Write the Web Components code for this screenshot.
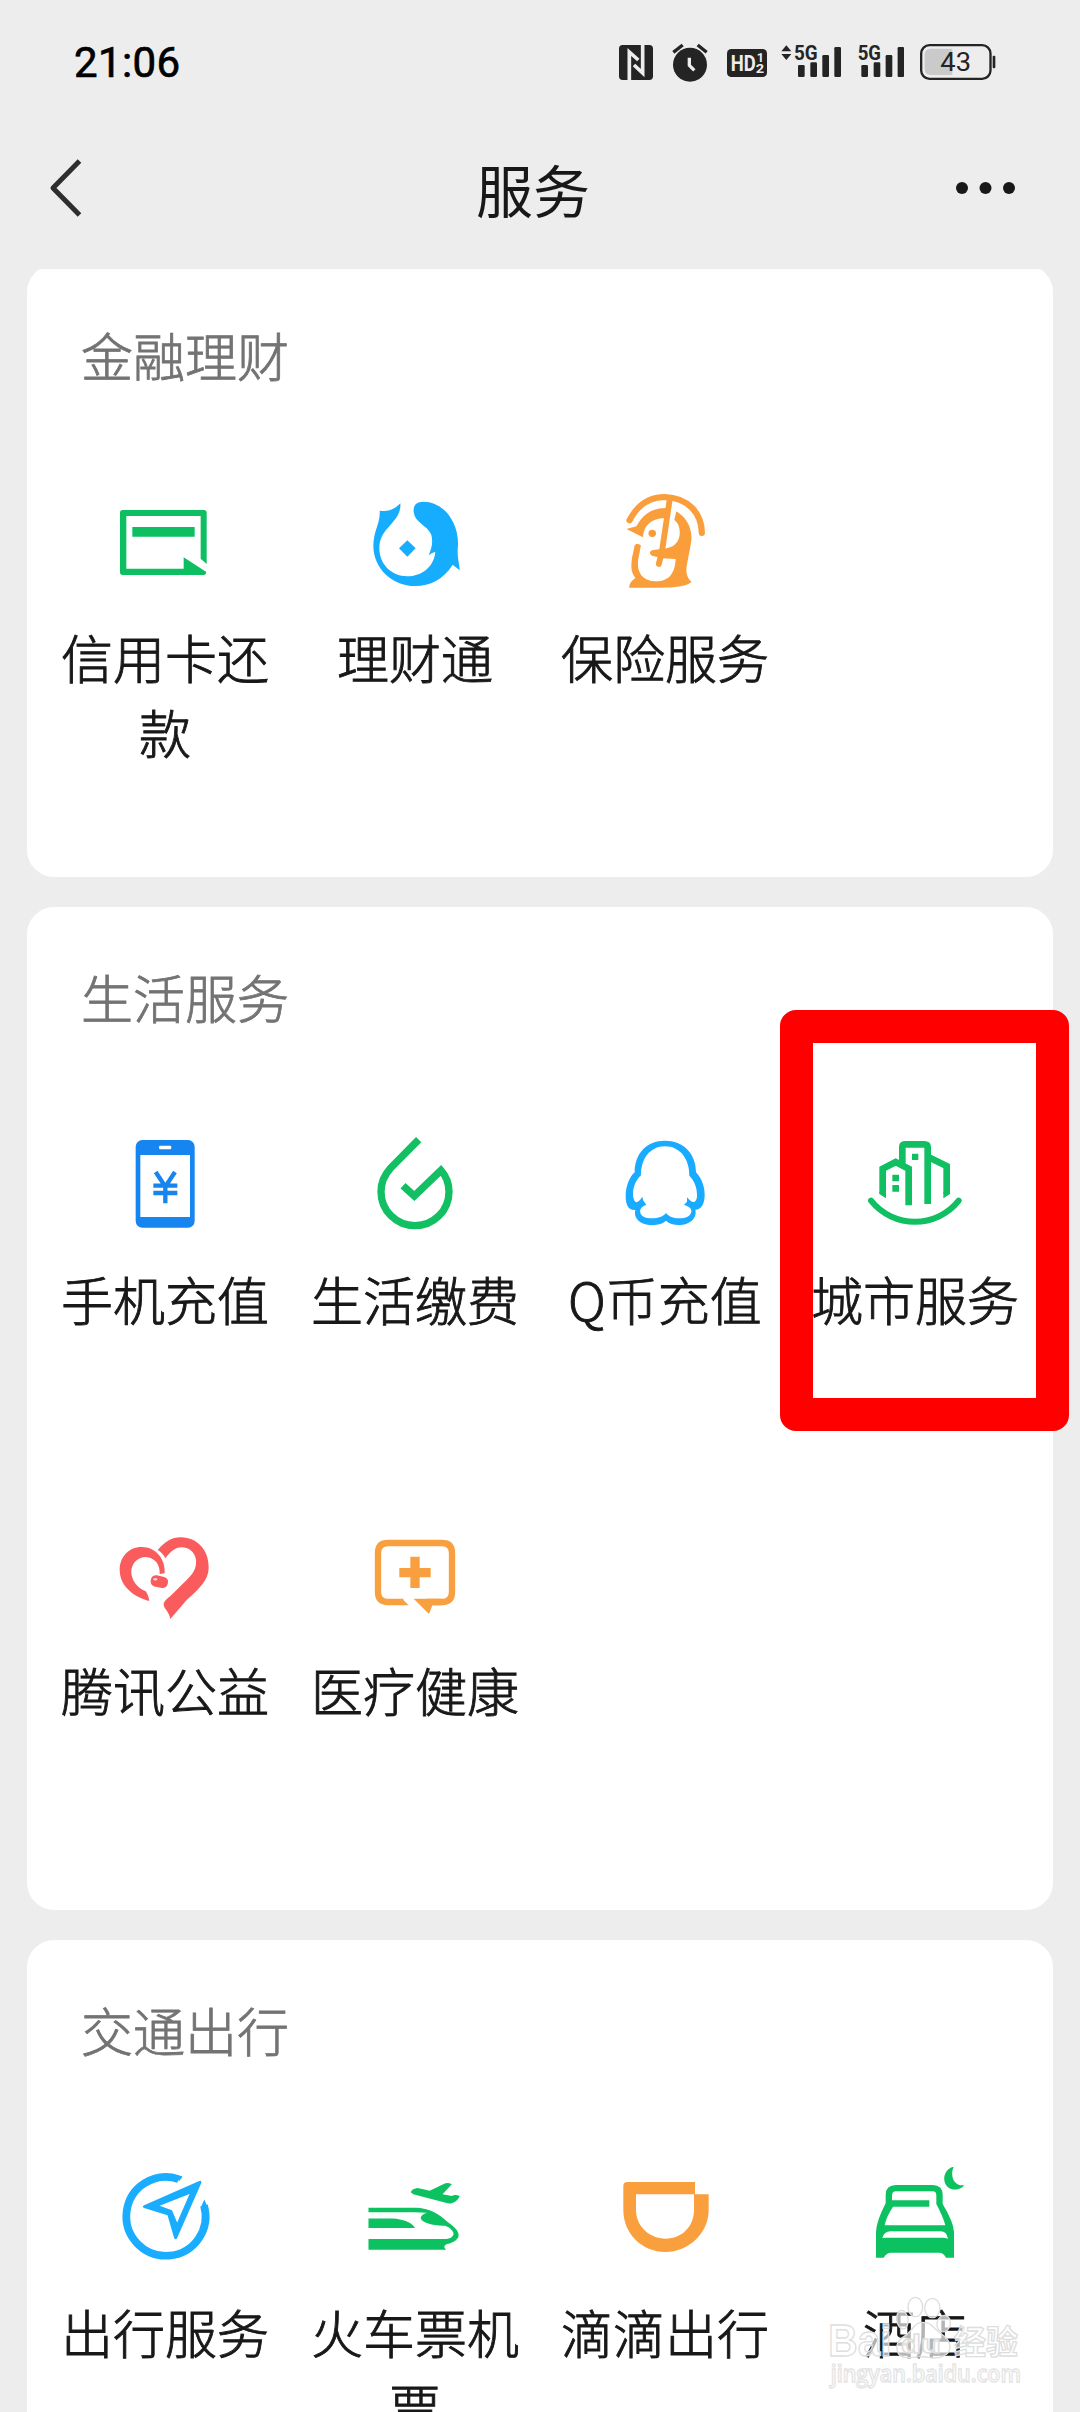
<!DOCTYPE html>
<html lang="zh-CN">
<head>
<meta charset="utf-8">
<title>服务</title>
<style>
html,body{margin:0;padding:0}
body{width:1080px;height:2412px;overflow:hidden;background:#ededed;font-family:"Noto Sans CJK SC","Noto Sans",sans-serif;color:#181818}
</style>
</head>
<body>
<services-page></services-page>
<script>
const define = (name, html) => {
  const t = document.createElement('template');
  t.innerHTML = html;
  customElements.define(name, class extends HTMLElement {
    constructor() {
      super();
      this.attachShadow({ mode: 'open' }).append(t.content.cloneNode(true));
    }
  });
};

define('status-bar', `
<style>
:host{display:flex;height:84px;padding:0 84px 0 74px;box-sizing:border-box;align-items:flex-start;justify-content:space-between}
time{font:400 42px/50px Roboto,sans-serif;-webkit-text-stroke:.7px #000;letter-spacing:.4px;color:#000;margin-top:38px}
.icons{display:flex;margin-top:40px;color:#242424}
svg{display:block;height:43.33px;fill:currentColor}
text{font-family:Roboto,sans-serif}
</style>
<time>21:06</time>
<div class="icons">
<svg style="width:34px" viewBox="117 60 102 130"><rect x="117" y="75" width="102" height="105" rx="11"/><path d="M148 180V96l27 24M188 75v84l-26-24" fill="none" stroke="#ededed" stroke-width="11"/></svg>
<svg style="width:36px;margin-left:19px" viewBox="276 60 108 130"><circle cx="330" cy="134" r="51"/><path d="M280 97l28-22M380 97l-27-22" stroke="currentColor" stroke-width="10"/><path d="M328 113v23l15 15" fill="none" stroke="#ededed" stroke-width="10"/></svg>
<svg style="width:40px;margin-left:19px" viewBox="441 60 120 130"><rect x="441" y="87" width="120" height="84" rx="13"/><g fill="#ededed"><text x="452" y="152" font-size="66" font-weight="700" textLength="75" lengthAdjust="spacingAndGlyphs">HD</text><text x="530" y="126" font-size="38" font-weight="700">1</text><text x="527" y="160" font-size="38" font-weight="700" textLength="25" lengthAdjust="spacingAndGlyphs">2</text></g></svg>
<svg style="width:60px;margin-left:14px" viewBox="603 60 180 130"><path d="M604 94l15-18 15 18zM604 102l15 18 15-18z"/><text x="642" y="120" font-size="61" font-weight="700" textLength="71" lengthAdjust="spacingAndGlyphs">5G</text><rect x="654" y="135" width="20" height="36" rx="4"/><rect x="691" y="127" width="20" height="44" rx="4"/><rect x="727" y="105" width="20" height="66" rx="4"/><rect x="763" y="81" width="20" height="90" rx="4"/></svg>
<svg style="width:46.3px;margin-left:16.7px" viewBox="833 60 139 130"><text x="832" y="120" font-size="61" font-weight="700" textLength="70" lengthAdjust="spacingAndGlyphs">5G</text><rect x="843" y="135" width="20" height="36" rx="4"/><rect x="880" y="127" width="20" height="44" rx="4"/><rect x="916" y="105" width="20" height="66" rx="4"/><rect x="952" y="81" width="20" height="90" rx="4"/></svg>
<svg style="width:76px;margin-left:16px" viewBox="1020 60 228 130"><path d="M1117 86V165H1052Q1034 165 1034 147V104Q1034 86 1052 86Z" fill="#cacaca"/><rect x="1023.500" y="75.500" width="208" height="101" rx="25" fill="none" stroke="currentColor" stroke-width="7"/><rect x="1238" y="107" width="8" height="38" rx="3"/><text x="1081" y="153" font-size="80" textLength="92" lengthAdjust="spacingAndGlyphs">43</text></svg>
</div>`);

define('nav-bar', `
<style>
:host{display:flex;height:185px;padding:0 64px 0 46px;box-sizing:border-box;justify-content:space-between;align-items:flex-start}
svg{display:block;margin-top:72px}
h1{margin:64px 0 0 26px;font-weight:400;font-size:57px;line-height:80px}
</style>
<svg width="40" height="64" viewBox="46 156 40 64" fill="none" stroke="#2e2e2e" stroke-width="5"><path d="M79.500 161L53 188l26.500 27" stroke-linejoin="round"/></svg>
<h1><slot></slot></h1>
<svg width="62" height="64" viewBox="954 156 62 64" fill="#181818"><circle cx="962" cy="188" r="6"/><circle cx="985.500" cy="188" r="6"/><circle cx="1009" cy="188" r="6"/></svg>`);

define('service-card', `
<style>
:host{display:block;box-sizing:border-box;margin:0 27px 30px;padding:52px 13px 0;background:#fff;border-radius:27px}
h2{margin:0 0 100px 41px;font-weight:300;font-size:52px;line-height:75px;color:#737373;-webkit-text-stroke:.8px #737373}
.grid{display:grid;grid-template-columns:repeat(4,250px);grid-auto-rows:391px}
</style>
<h2><slot name="title"></slot></h2>
<div class="grid"><slot></slot></div>`);

define('service-item', `
<style>
:host{display:flex;flex-direction:column;align-items:center}
::slotted(svg){display:block;width:100px;height:100px;flex:none}
.label{width:212px;margin-top:27px;text-align:center;font-weight:300;font-size:52px;line-height:75px;word-break:break-all;-webkit-text-stroke:.9px #181818}
</style>
<slot name="icon"></slot>
<div class="label"><slot></slot></div>`);

define('focus-frame', `
<style>:host{position:absolute;left:780px;top:1010px;width:289px;height:421px;box-sizing:border-box;border:33px solid #f00;border-radius:16px}</style>`);

define('water-mark', `
<style>
:host{position:absolute;left:815px;top:2285px}
svg{display:block}
text{font-weight:700}
</style>
<svg width="220" height="110" viewBox="0 0 660 330" fill="#fff" fill-opacity=".68" stroke="#dedede" stroke-width="4">
<ellipse cx="301" cy="66" rx="22" ry="29"/><ellipse cx="352" cy="69" rx="23" ry="29"/><ellipse cx="262" cy="104" rx="17" ry="28" transform="rotate(-8 262 104)"/><ellipse cx="386" cy="116" rx="20" ry="25" transform="rotate(12 386 116)"/>
<path d="M322 112C296 112 292 143 263 157C235 175 242 218 276 218C300 218 320 212 340 217C365 222 405 218 405 184C403 155 375 148 355 126C347 116 338 112 322 112Z"/>
<text x="40" y="214" font-family="Liberation Sans" font-size="134" textLength="190" lengthAdjust="spacingAndGlyphs">Bai</text>
<text x="258" y="203" font-family="Liberation Sans" font-size="80" textLength="120" lengthAdjust="spacingAndGlyphs">du</text>
<text x="417" y="208" font-family="Noto Sans CJK SC" font-size="98" textLength="192" lengthAdjust="spacingAndGlyphs">经验</text>
<text x="47" y="290" font-family="Open Sans" font-size="68" style="font-weight:600" stroke="#e4e4e4" textLength="571" lengthAdjust="spacingAndGlyphs">jingyan.baidu.com</text>
</svg>`);

define('services-page', `
<style>
:host{display:block;position:relative;width:1080px;height:2412px;overflow:hidden}
.scroll{height:2143px;overflow:hidden}
.scroll service-card:first-child{margin-top:-4px;height:612px}
.life{height:1003px}
</style>
<status-bar></status-bar>
<nav-bar>服务</nav-bar>
<div class="scroll">
<service-card><span slot="title">金融理财</span>
<service-item><svg slot="icon" viewBox="225 576 300 300" fill="#0dbf60"><path d="M248 630H492q8 0 8 8V792L482 776V648H259V806H431V772L498 815q2 9-8 10H248q-8 0-8-8V638q0-8 8-8z"/><path d="M277 681h187v29H277z"/></svg>信用卡还款</service-item>
<service-item><svg slot="icon" viewBox="975 576 300 300" fill="#16adff"><path d="M1081 610C1062 630 1042 636 1019 632C1022 670 1000 690 1000 740C1002 805 1055 858 1126 858C1170 858 1210 838 1238 794L1259 811C1259 790 1250 775 1254 735C1256 665 1210 605 1150 605C1125 605 1120 620 1121 635C1125 670 1163 675 1174 705C1180 730 1174 745 1166 766C1172 762 1178 757 1186 756C1182 800 1145 829 1102 829C1052 829 1018 790 1018 745C1018 705 1040 690 1058 667C1075 648 1083 630 1081 610Z"/><path d="M1102 721l25 24-25 25-25-25z"/></svg>理财通</service-item>
<service-item><svg slot="icon" viewBox="217.800 96 290.400 300" preserveAspectRatio="none" fill="#fa9d3b"><g fill="none" stroke="#fa9d3b" stroke-width="18" stroke-linecap="round"><path d="M260 181Q295 111 362 111C430 113 470 160 470 219"/><path d="M377 116L354 275L345 312" stroke-width="17"/></g><path d="M251 207L280 199C297 165 325 143 367 144L362 174C325 175 300 195 299 232Z"/><circle cx="326" cy="220" r="11"/><path d="M396 154C420 170 440 195 440 235C436 275 425 310 425 335C427 350 432 358 440 366C425 380 390 383 350 383H259C260 368 268 361 277 354C262 335 265 315 267 295L275 256q6-10 18 0L285 300C280 345 305 364 338 364C370 364 392 345 394 297L355 295L325 287q-12-8 0-16L345 268L360 266C390 264 405 245 406 220C406 200 400 187 390 180Z"/></svg>保险服务</service-item>
</service-card>
<service-card class="life"><span slot="title">生活服务</span>
<service-item><svg slot="icon" viewBox="225 522 300 300" fill="#1785f0"><rect x="287" y="540" width="177" height="263" rx="20"/><path fill="#fff" d="M301 585h149v186H301z"/><rect x="357" y="557" width="37" height="11" rx="4" fill="#fff"/><path d="M347 636L376 680L405 636M340 677h72M340 699h72M376 672v58" fill="none" stroke="#1785f0" stroke-width="13"/></svg>手机充值</service-item>
<service-item><svg slot="icon" viewBox="975 522 300 300" fill="none" stroke="#12bf62" stroke-width="22"><path d="M1136 539L1052 624C1030 648 1023 668 1023 695A102 102 0 0 0 1227 695C1227 670 1219 649 1203 631L1123 708L1089 677"/></svg>生活缴费</service-item>
<service-item><svg slot="icon" viewBox="165 462 300 300" fill="#18abff" fill-rule="evenodd"><path d="M224 577C224 520 260 482 315 482C370 482 408 520 408 577C428 598 434 625 434 645C434 670 425 689 406 689C412 716 388 735 356 735C340 735 328 731 318 722C308 731 295 735 275 735C245 735 219 718 226 690C205 691 197 675 197 648C197 622 207 592 224 577ZM243 586C226 602 219 622 219 645C220 660 225 667 231 667Q240 663 247 650L250 662L259 674C245 680 239 685 241 698C244 710 258 715 275 715C295 715 310 709 318 699C326 709 340 715 357 715C378 715 392 708 394 695C395 685 388 680 372 674L381 665V652C390 662 395 667 402 666C409 664 411 655 411 645C411 622 403 602 388 587C389 540 362 499 315 499C268 499 242 540 243 586Z"/></svg>Q币充值</service-item>
<service-item><svg slot="icon" viewBox="915 462 300 300" fill="#10bf62"><g fill="none" stroke="#10bf62" stroke-width="20"><path d="M968 640V566L1007 546L1046 566V676M1027 555V500Q1027 493 1037 493H1093Q1103 493 1103 502V672M1103 530L1160 558V641"/><path d="M933 662C1000 746 1130 746 1196 662" stroke-width="18" stroke-linecap="round"/></g><path d="M958 635h20v20l-20-13zM1170 635h-20v20l20-13zM1056 521h19v19h-19zM997 584h20v20h-20zM997 615h20v20h-20z"/></svg>城市服务</service-item>
<service-item><svg slot="icon" viewBox="225 75 300 300" fill="#fa5b5c"><path d="M353 150C375 125 395 112 422 112C475 112 508 155 506 205C505 240 480 265 440 300L391 357C388 335 370 325 371 312C372 303 380 297 392 287L440 240C460 220 470 205 468 180C465 155 445 142 425 142C405 142 392 155 376 175Q368 158 353 150Z"/><path d="M359 222L374 220C377 180 350 141 305 141C265 141 239 172 239 210C240 262 285 292 328 303C326 290 322 280 317 274C290 262 273 240 274 212C276 188 295 171 318 171C342 172 361 192 359 222Z"/><rect x="332" y="228" width="52" height="34" rx="15" transform="rotate(12 358 245)"/><ellipse cx="346" cy="238" rx="6" ry="4" fill="#fcc"/></svg>腾讯公益</service-item>
<service-item><svg slot="icon" viewBox="975 75 300 300" fill="#f8a03f"><path d="M1090 306H1044Q1014 306 1014 276V159Q1014 129 1044 129H1206Q1236 129 1236 159V276Q1236 306 1206 306H1160" fill="none" stroke="#f8a03f" stroke-width="19"/><path d="M1086 296.500L1106 315.500H1086ZM1121 296.500H1205V315.500H1177L1167 342ZM1111 170h28v34h33v28h-33v32h-28v-32h-33v-28h33z"/></svg>医疗健康</service-item>
</service-card>
<service-card><span slot="title">交通出行</span>
<service-item><svg slot="icon" viewBox="332.500 844.500 290.400 294.700" preserveAspectRatio="none" fill="#1aadff"><path d="M517 880A115 116 0 1 0 591 958" fill="none" stroke="#1aadff" stroke-width="22.500"/><path d="M512 870Q530 870 528 874L518 887ZM583 960L592 940L601 962Z"/><path fill-rule="evenodd" d="M577 886Q585 882 583 892L513 1054Q508 1062 504 1053L485 987L417 965Q409 961 417 957ZM549 924L462 959L498 972L513 1008Z"/></svg>出行服务</service-item>
<service-item><svg slot="icon" viewBox="1059.900 845.900 290.400 294.700" preserveAspectRatio="none" fill="#0cc160"><path d="M1070 966H1210C1250 968 1275 985 1300 1008C1325 1025 1335 1040 1331 1052C1325 1065 1310 1070 1298 1073C1288 1078 1288 1083 1296 1090H1070V1058H1295C1310 1057 1320 1048 1316 1038C1312 1028 1300 1022 1293 1019C1262 1021 1225 1010 1222 998C1221 990 1230 983 1242 981Q1228 979 1200 979H1070Z"/><path d="M1070 998H1140C1170 1000 1195 1008 1205 1026H1070ZM1193 920Q1195 911 1212 908Q1228 912 1248 916L1290 895Q1300 890 1312 897L1285 926L1312 931Q1322 926 1335 931C1330 945 1315 955 1300 953L1200 926Z"/></svg>火车票机票</service-item>
<service-item><svg slot="icon" viewBox="165 111 300 300" fill="#fa9f3e" fill-rule="evenodd"><path d="M202 156H405V193H446V240C446 310 385 366 317 366C245 366 190 310 190 240V168Q190 156 202 156ZM228 193V240C228 290 270 326 317 326C365 326 402 290 402 240V193Z"/></svg>滴滴出行</service-item>
<service-item><svg slot="icon" viewBox="915 111 300 300" fill="#0cc160" fill-rule="evenodd"><path d="M977 220V195Q977 165 1008 165H1118Q1148 165 1148 195V222Q1180 275 1182 305V383H1158Q1150 368 1138 368H993Q980 368 971 383H948V305Q950 272 977 220ZM996 211V197Q996 184 1008 184H1118Q1129 184 1129 197V222Q1150 262 1156 286H974Q978 262 999 230H1108V211ZM967 324Q972 304 992 304H1142Q1160 304 1164 326Q1156 323 1148 323H980Q972 323 967 324Z"/><path d="M1181 110C1150 118 1145 155 1163 171C1180 185 1205 178 1212 166C1185 168 1168 143 1181 110Z"/></svg>酒店</service-item>
</service-card>
</div>
<focus-frame></focus-frame>
<water-mark></water-mark>`);
</script>
</body>
</html>
